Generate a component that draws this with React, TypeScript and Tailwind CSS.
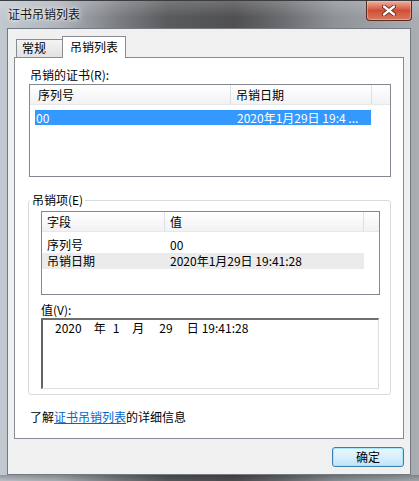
import React from 'react';

// Win7 style "证书吊销列表" dialog

function CloseButton() {
  return (
    <div className="mr-[7px] w-[46px] h-[20px] rounded-b-[4px] border border-t-0 border-[#5b2a22] bg-gradient-to-b from-[#eab0a2] via-[#cf4f35] to-[#d77a5f] flex items-center justify-center shadow-[inset_0_0_0_1px_rgba(255,200,190,0.45)]">
      <svg width="14" height="11" viewBox="0 0 14 11">
        <path d="M2 1.5 L12 9.5 M12 1.5 L2 9.5" stroke="#5a1d14" strokeWidth="4" strokeLinecap="round" />
        <path d="M2 1.5 L12 9.5 M12 1.5 L2 9.5" stroke="#ffffff" strokeWidth="2.4" strokeLinecap="round" />
      </svg>
    </div>
  );
}

function Tabs() {
  return (
    <div className="h-[28px] flex items-end pl-[8px]">
      <div className="w-[46px] h-[18px] border border-r-0 border-b-0 border-[#898c95] bg-gradient-to-b from-[#f4f4f4] to-[#e2e2e2] pl-[5px] leading-[16px]">
        常规
      </div>
      <div className="relative z-10 -mb-[1px] w-[64px] h-[22px] border border-b-0 border-[#898c95] bg-white text-center leading-[20px]">
        吊销列表
      </div>
    </div>
  );
}

function RevokedList() {
  return (
    <div className="ml-[14px] mt-[1px] w-[362px] h-[93px] border border-[#828790] bg-white">
      <div className="flex h-[20px] bg-gradient-to-b from-white to-[#f1f2f4] border-b border-[#e6e8eb] leading-[19px]">
        <div className="w-[201px] pl-[8px] border-r border-[#dde0e5]">序列号</div>
        <div className="w-[141px] pl-[5px] border-r border-[#dde0e5]">吊销日期</div>
        <div className="flex-1" />
      </div>
      <div className="mt-[5px] ml-[5px] w-[336px] h-[15px] bg-[#3399ff] text-white flex leading-[15px]">
        <div className="w-[196px] pl-[1px]">00</div>
        <div className="pl-[6px] whitespace-pre">2020年1月29日 19:4 ...</div>
      </div>
    </div>
  );
}

function EntryList() {
  const rows = [
    { field: '序列号', value: '00', hover: false },
    { field: '吊销日期', value: '2020年1月29日 19:41:28', hover: true },
  ];
  return (
    <div className="ml-[12px] mt-[10px] w-[339px] h-[84px] border border-[#828790] bg-white">
      <div className="flex h-[20px] bg-gradient-to-b from-white to-[#f1f2f4] border-b border-[#e6e8eb] leading-[19px]">
        <div className="w-[123px] pl-[5px] border-r border-[#dde0e5]">字段</div>
        <div className="w-[199px] pl-[5px] border-r border-[#dde0e5]">值</div>
        <div className="flex-1" />
      </div>
      <div className="mt-[5px]">
        {rows.map(r => (
          <div
            key={r.field}
            className={`flex w-[322px] h-[16px] leading-[16px] ${r.hover ? 'bg-[#ebebeb]' : ''}`}
          >
            <div className="w-[123px] pl-[5px]">{r.field}</div>
            <div className="pl-[5px]">{r.value}</div>
          </div>
        ))}
      </div>
    </div>
  );
}

function EntryGroup() {
  return (
    <div className="relative ml-[13px] mt-[23px] w-[363px] h-[195px] border border-[#d5dbe0] rounded-[3px]">
      <div className="absolute -top-[9px] left-[1px] px-[2px] bg-white leading-[16px]">吊销项(E)</div>
      <EntryList />
      <div className="ml-[12px] mt-[7px] h-[16px] leading-[16px]">值(V):</div>
      <div className="ml-[12px] w-[338px] h-[71px] bg-white border-t-2 border-l-2 border-r border-b border-t-[#6e6e6e] border-l-[#646464] border-r-[#dedede] border-b-[#dedede] pl-[12px] leading-[16px] flex items-start">
        <span>2020</span>
        <span className="ml-[12px]">年</span>
        <span className="ml-[7px]">1</span>
        <span className="ml-[13px]">月</span>
        <span className="ml-[15px]">29</span>
        <span className="ml-[14px]">日</span>
        <span className="ml-[3px]">19:41:28</span>
      </div>
    </div>
  );
}

export default function App() {
  return (
    <div className="w-[419px] h-[481px] flex flex-col overflow-hidden text-[12px] text-black font-['Noto_Sans_CJK_SC','Liberation_Sans',sans-serif] bg-[linear-gradient(to_right,#c3c9d0_0%,#aeb4bb_14%,#7c7e82_28%,#5a5b5d_40%,#505052_56%,#6c6d70_68%,#8f9397_80%,#aaaeb3_100%)]">
      {/* Title bar */}
      <div className="h-[28px] flex justify-between border-t border-[#3a3d42] bg-[linear-gradient(to_bottom,rgba(255,255,255,0.18),rgba(255,255,255,0)_60%)]">
        <div className="pl-[8px] pt-[5px] leading-[16px] text-[#111] [text-shadow:0_0_6px_rgba(255,255,255,0.9),0_0_3px_rgba(255,255,255,0.9)]">
          证书吊销列表
        </div>
        <CloseButton />
      </div>

      {/* Client area */}
      <div className="ml-[7px] w-[404px] h-[447px] border border-[#737a83] bg-[#f0f0f0] flex flex-col">
        <Tabs />
        <div className="ml-[6px] w-[390px] h-[382px] border border-[#898c95] bg-white">
          <div className="ml-[15px] mt-[9px] h-[16px] leading-[16px]">吊销的证书(R):</div>
          <RevokedList />
          <EntryGroup />
          <div className="ml-[15px] mt-[14px] h-[16px] leading-[16px]">
            了解<span className="text-[#0066cc] underline">证书吊销列表</span>的详细信息
          </div>
        </div>
        <div className="self-end mr-[6px] mt-[8px] w-[72px] h-[20px] rounded-[3px] border border-[#3c7fb1] bg-gradient-to-b from-[#eaf6fd] via-[#d9f0fc] to-[#bee3f7] shadow-[inset_0_0_0_1px_#a8e4fb] text-center leading-[18px]">
          确定
        </div>
      </div>

      {/* Bottom frame */}
      <div className="flex-1 bg-[linear-gradient(to_bottom,rgba(0,0,0,0.25),rgba(0,0,0,0.05))]" />
    </div>
  );
}
